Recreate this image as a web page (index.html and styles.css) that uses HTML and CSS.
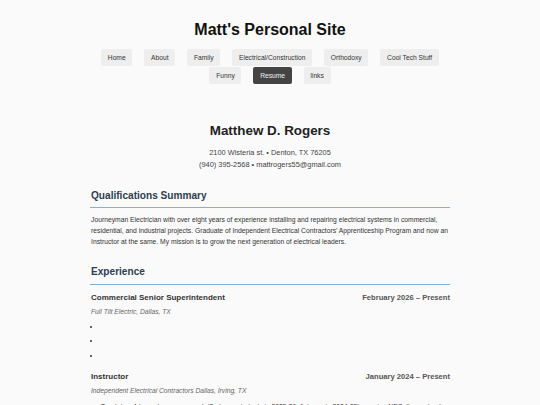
FILE: index.html
```html
<!DOCTYPE html>
<html lang="en">
<head>
<meta charset="utf-8">
<title>Matt's Personal Site - Resume</title>
<link rel="stylesheet" href="styles.css">
</head>
<body>
<div class="page">
  <header class="site-header">
    <h1 class="site-title">Matt's Personal Site</h1>
    <nav class="nav">
      <a class="nav-btn" href="#">Home</a>
      <a class="nav-btn" href="#">About</a>
      <a class="nav-btn" href="#">Family</a>
      <a class="nav-btn" href="#">Electrical/Construction</a>
      <a class="nav-btn" href="#">Orthodoxy</a>
      <a class="nav-btn" href="#">Cool Tech Stuff</a>
      <a class="nav-btn" href="#">Funny</a>
      <a class="nav-btn active" href="#">Resume</a>
      <a class="nav-btn" href="#">links</a>
    </nav>
  </header>

  <main class="resume">
    <div class="contact">
      <h2 class="name">Matthew D. Rogers</h2>
      <p class="contact-line">2100 Wisteria st. • Denton, TX 76205</p>
      <p class="contact-line">(940) 395-2568 • mattrogers55@gmail.com</p>
    </div>

    <section class="section">
      <h3 class="section-title">Qualifications Summary</h3>
      <p class="summary">Journeyman Electrician with over eight years of experience installing and repairing electrical systems in commercial, residential, and industrial projects. Graduate of Independent Electrical Contractors' Apprenticeship Program and now an Instructor at the same. My mission is to grow the next generation of electrical leaders.</p>
    </section>

    <section class="section">
      <h3 class="section-title">Experience</h3>
      <div class="job">
        <div class="job-head">
          <span class="job-title">Commercial Senior Superintendent</span>
          <span class="job-date">February 2026 – Present</span>
        </div>
        <div class="job-company">Full Tilt Electric, Dallas, TX</div>
        <ul class="job-list">
          <li></li>
          <li></li>
          <li></li>
        </ul>
      </div>
      <div class="job">
        <div class="job-head">
          <span class="job-title">Instructor</span>
          <span class="job-date">January 2024 – Present</span>
        </div>
        <div class="job-company">Independent Electrical Contractors Dallas, Irving, TX</div>
        <ul class="job-list">
          <li>Teach two 4-hour classes per week (2nd year students in 2025-26; 1st year in 2024-25) covering NEC, theory, lead</li>
        </ul>
      </div>
    </section>
  </main>
</div>
</body>
</html>
```

FILE: styles.css
```css
html, body {
  margin: 0;
  padding: 0;
}

body {
  background: #fafafa;
  color: #333;
  font-family: "Liberation Sans", Arial, sans-serif;
  font-size: 6.7px;
  line-height: 11px;
}

.page {
  width: 360px;
  margin: 0 auto;
}

.site-header {
  padding-top: 20px;
}

.site-title {
  margin: 0;
  font-size: 16px;
  line-height: 20px;
  font-weight: bold;
  text-align: center;
  color: #111;
}

.nav {
  margin-top: 9.3px;
  display: flex;
  flex-wrap: wrap;
  justify-content: center;
  column-gap: 12px;
  row-gap: 1px;
}

.nav-btn {
  display: block;
  padding: 4.5px 6.7px;
  line-height: 8px;
  font-size: 6.7px;
  color: #333;
  background: #eeeeee;
  border-radius: 2px;
  text-decoration: none;
}

.nav-btn.active {
  background: #444444;
  color: #f2f2f2;
}

.resume {
  padding-top: 39px;
}

.contact {
  text-align: center;
}

.name {
  margin: 0;
  font-size: 13.4px;
  line-height: 16px;
  font-weight: bold;
  color: #222;
}

.contact-line {
  margin: 0;
  font-size: 7.4px;
  line-height: 11.7px;
  color: #444;
}

.name + .contact-line {
  margin-top: 7.6px;
}

.section {
  margin-top: 19.5px;
}

.section-title {
  margin: 0;
  padding-left: 1px;
  font-size: 10.1px;
  line-height: 12px;
  font-weight: bold;
  color: #2c3e50;
  padding-bottom: 5.2px;
  border-bottom: 1px solid #7bb3da;
}

.summary {
  margin: 6px 0 0;
  padding-left: 1px;
  font-size: 6.75px;
  line-height: 11px;
  color: #333;
}

.job {
  margin-top: 8px;
  padding-left: 1px;
}

.job + .job {
  margin-top: 11.8px;
}

.job-head {
  display: flex;
  justify-content: space-between;
  align-items: baseline;
  line-height: 10px;
}

.job-title {
  font-size: 8px;
  font-weight: bold;
  color: #333;
}

.job-date {
  font-size: 7.6px;
  font-weight: bold;
  color: #555;
}

.job-company {
  margin-top: 4px;
  font-size: 6.7px;
  line-height: 10px;
  font-style: italic;
  color: #666;
}

.job-list {
  margin: 4.3px 0 0;
  padding-left: 10px;
}

.job-list li {
  min-height: 11px;
  line-height: 11px;
  margin-bottom: 3.3px;
  color: #333;
}
```
